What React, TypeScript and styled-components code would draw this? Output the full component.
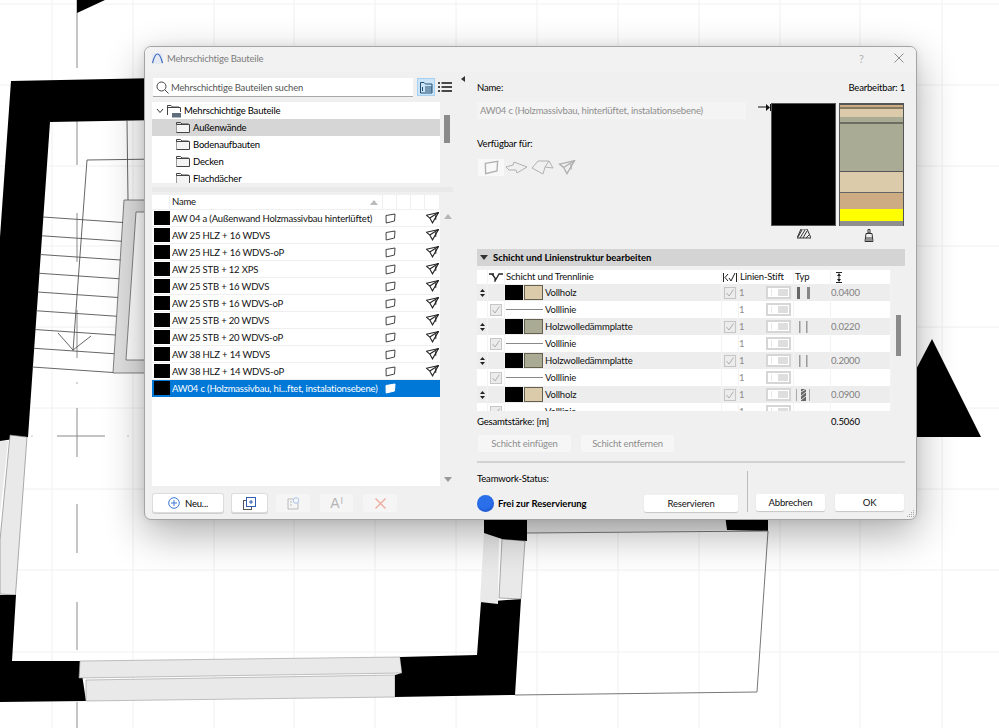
import React from "react";
import styled, { createGlobalStyle } from "styled-components";

const Global = createGlobalStyle`
  html, body { margin: 0; padding: 0; background: #fff; }
  body { font-family: "Lato", "Noto Sans", "Liberation Sans", sans-serif; font-size: 9.5px; letter-spacing: -.18px; color: #000; }
  * { box-sizing: border-box; }
`;

const Page = styled.div`
  width: 999px; height: 728px; overflow: hidden; background: #fff; position: relative;
`;
const PlanSvg = styled.svg`
  position: absolute; left: 0; top: 0; width: 999px; height: 728px; display: block;
`;
const Dialog = styled.div`
  position: absolute; left: 144px; top: 46px; width: 773px; height: 474px;
  background: #f0f0f0; border: 1px solid #a4a4a4; border-radius: 7px;
  box-shadow: 0 14px 40px rgba(0,0,0,.32), 0 0 8px rgba(0,0,0,.08);
  display: flex; flex-direction: column; overflow: hidden;
`;
const TitleBar = styled.div`
  height: 25px; flex: none; display: flex; align-items: center; padding: 0 12px 3px 7px;
  background: #f2f2f2; color: #7c7c7c;
`;
const LogoBox = styled.div`
  width: 11px; height: 11px; background: #e4e9f2; border-radius: 2px; display: flex;
`;
const TitleText = styled.span`margin-left: 4px; flex: 1;`;
const Help = styled.span`width: 35px; font-size: 11px; color: #b4b4b4;`;
const Body = styled.div`flex: 1; display: flex; min-height: 0;`;
const LeftPane = styled.div`
  width: 315px; flex: none; padding: 6px 0 0 7px; display: flex; flex-direction: column;
`;
const SearchRow = styled.div`display: flex; align-items: flex-start; height: 19px;`;
const SearchBox = styled.div`
  width: 260px; height: 19px; margin-left: 1px; background: #fff; border-bottom: 1px solid #a8a8a8;
  display: flex; align-items: center; padding-left: 3px; color: #555; gap: 2px;
`;
const ViewToggle = styled.div<{ $on?: boolean }>`
  width: 18px; height: 18px; margin-left: ${p => (p.$on ? "4px" : "1px")};
  background: ${p => (p.$on ? "#cde4f7" : "transparent")};
  border: 1px solid ${p => (p.$on ? "#a5d0f2" : "transparent")};
  display: flex; align-items: center; justify-content: center;
`;
const TreeRow = styled.div`display: flex; margin-top: 5px; height: 81px; gap: 4px;`;
const Tree = styled.div`width: 288px; background: #fff; overflow: hidden;`;
const TreeItem = styled.div<{ $sel?: boolean; $root?: boolean }>`
  height: 17px; display: flex; align-items: center; gap: ${p => (p.$root ? "2px" : "3px")}; flex: none;
  padding-left: ${p => (p.$root ? "4px" : "24px")};
  background: ${p => (p.$sel ? "#d6d6d6" : "transparent")};
`;
const ScrollTrack = styled.div<{ $top: number; $h: number; $w?: number }>`
  width: ${p => p.$w ?? 6}px; flex: none; padding-top: ${p => p.$top}px;
  &::before { content: ""; display: block; height: ${p => p.$h}px; background: #8b8b8b; }
`;
const SplitBand = styled.div`height: 5px; width: 301px; margin-top: 4px; background: #e9e9e9;`;
const ListRow = styled.div`display: flex; margin-top: 3px; height: 291px;`;
const List = styled.div`width: 288px; background: #fff;`;
const columns = "18px 213px 14px 14px 14px 15px";
const ListHead = styled.div`
  display: grid; grid-template-columns: ${columns}; height: 15px; border-bottom: 1px solid #f0f0f0;
`;
const HeadCell = styled.div`
  border-right: 1px solid #f0f0f0; display: flex; align-items: center; justify-content: space-between;
  padding: 0 4px 0 2px; color: #111; line-height: 14px;
`;
const ListItem = styled.div<{ $sel?: boolean }>`
  display: grid; grid-template-columns: ${columns}; height: 17px; align-items: center;
  background: ${p => (p.$sel ? "#0078d7" : "#fff")};
  color: ${p => (p.$sel ? "#fff" : "#111")};
  border-bottom: 1px solid ${p => (p.$sel ? "#0078d7" : "#efefef")};
  white-space: nowrap;
`;
const ListSwatch = styled.div`width: 16px; height: 14px; margin-left: 2px; background: #000;`;
const ListName = styled.div`padding-left: 2px; overflow: visible;`;
const IconCell = styled.div<{ $span?: number }>`
  grid-column: span ${p => p.$span ?? 1}; display: flex; align-items: center; justify-content: center;
`;
const ListScroll = styled.div`
  flex: none; width: 16px; display: flex; flex-direction: column; justify-content: space-between;
  align-items: center; padding: 19px 0 4px 0;
`;
const ToolRow = styled.div`display: flex; margin-top: 8px; height: 18px; padding-left: 1px;`;
const ToolButton = styled.div<{ $w: number; $off?: boolean; $gap: number }>`
  width: ${p => p.$w}px; margin-right: ${p => p.$gap}px; height: 18px; border-radius: 2px;
  display: flex; align-items: center; justify-content: center; gap: 5px;
  background: ${p => (p.$off ? "#f5f5f5" : "#fff")};
  box-shadow: ${p => (p.$off ? "none" : "0 0 0 1px #dcdcdc, 0 1px 0 1px #cfcfcf")};
`;
const GlyphA = styled.span`
  font-size: 14px; line-height: 14px; color: #b5b5b5; font-family: "Liberation Sans", sans-serif;
`;
const GlyphCursor = styled.span`
  font-size: 9px; line-height: 9px; color: #b5b5b5; margin: -5px 0 0 -4px;
`;
const Splitter = styled.div`width: 17px; flex: none; padding: 1px 0 0 1px;`;
const RightPane = styled.div`width: 428px; flex: none; display: flex; flex-direction: column;`;
const NameRow = styled.div`
  display: flex; justify-content: space-between; margin-top: 9px; height: 14px; line-height: 14px;
`;
const MainRow = styled.div`display: flex; height: 147px; margin-top: 7px;`;
const MetaCol = styled.div`width: 269px; flex: none; display: flex; flex-direction: column;`;
const NameInput = styled.div`
  height: 17px; background: #f4f4f4; color: #8e8e8e; padding-left: 3px; line-height: 17px; white-space: nowrap;
`;
const AvailableLabel = styled.div`margin-top: 18px; height: 14px; line-height: 14px;`;
const AvailableIcons = styled.div`display: flex; align-items: center; margin-top: 8px; height: 17px; padding-left: 1px;`;
const AvailIcon = styled.div<{ $on?: boolean; $w: number }>`
  width: ${p => p.$w}px; height: 17px; display: flex; align-items: center; justify-content: center;
  background: ${p => (p.$on ? "#f8f8f8" : "transparent")};
`;
const Marker = styled.div`width: 25px; flex: none; padding: 0 0 0 12px;`;
const PreviewCol = styled.div`width: 133px; flex: none; padding-top: 1px;`;
const PreviewBoxes = styled.div`display: flex; gap: 3px; height: 123px;`;
const BlackBox = styled.div`width: 65px; background: #000; border: 1px solid #555;`;
const LayerBox = styled.div`
  width: 65px; display: flex; flex-direction: column; border-left: 1px solid #555; border-right: 1px solid #555;
`;
const LayerBand = styled.div<{ $c: string; $h: number }>`
  height: ${p => p.$h}px; background: ${p => p.$c}; flex: none;
`;
const PreviewIcons = styled.div`display: flex; gap: 3px; margin-top: 3px;`;
const PreviewIcon = styled.div<{ $w: number }>`width: ${p => p.$w}px; display: flex; justify-content: center;`;
const SectionHead = styled.div`
  height: 17px; background: #d4d4d4; display: flex; align-items: center; gap: 5px; padding-left: 3px;
  font-weight: 700; color: #000; flex: none; letter-spacing: -.02px;
`;
const TableRow = styled.div`display: flex; margin-top: 4px; height: 141px; gap: 5px;`;
const Table = styled.div`width: 414px; height: 141px; overflow: hidden; flex: none;`;
const tcols = "11px 17px 217px 17px 55px 37px 60px";
const THead = styled.div`
  display: grid; grid-template-columns: ${tcols}; height: 14px; background: #fff; line-height: 14px;
`;
const TRow = styled.div<{ $alt?: boolean }>`
  display: grid; grid-template-columns: ${tcols}; height: 17px; background: ${p => (p.$alt ? "#ededed" : "#fff")};
`;
const TCell = styled.div`
  display: flex; align-items: center; border-right: 1px solid #f3f3f3; color: #111;
  white-space: nowrap; min-width: 0; gap: 2px; line-height: 14px;
`;
const CenterCell = styled(TCell)`justify-content: center;`;
const TextHead = styled(TCell)`padding-left: 1px;`;
const TypCell = styled(TCell)`padding-left: 2px;`;
const PenCell = styled(TCell)`justify-content: space-between; color: #8c8c8c; padding-right: 2px;`;
const NumCell = styled(TCell)`color: #808080;`;
const Box = styled.div`
  width: 12px; height: 12px; border: 1px solid #c6c6c6; background: #ececec;
  display: flex; align-items: center; justify-content: center;
`;
const SwatchPair = styled.div`display: flex; gap: 1px;`;
const BlackSwatch = styled.div`width: 18px; height: 15px; background: #000;`;
const ColorSwatch = styled.div<{ $c: string }>`
  width: 19px; height: 15px; background: ${p => p.$c}; border: 1px solid #66604f;
`;
const LineSample = styled.div`width: 37px; height: 1px; background: #888; margin-left: 1px;`;
const PenToggle = styled.div`
  width: 25px; height: 13px; border: 2px solid #d6d6d6; background: #fff; display: flex; align-items: stretch;
  padding: 1px; justify-content: flex-end;
  &::before { content: ""; width: 1px; background: #e8e8e8; margin-right: 6px; }
  &::after { content: ""; width: 10px; background: #dedede; }
`;
const TotalRow = styled.div`display: flex; margin-top: 4px; height: 14px; line-height: 14px;`;
const TotalLabel = styled.div`width: 354px; flex: none;`;
const ActionRow = styled.div`display: flex; gap: 10px; margin-top: 6px; padding-left: 1px;`;
const ActionButton = styled.div`
  width: 93px; height: 17px; background: #f6f6f6; color: #8e8e8e; text-align: center; line-height: 17px;
  border-radius: 2px; white-space: nowrap;
`;
const Rule = styled.div`height: 2px; background: #d2d2d2; margin-top: 9px;`;
const FootRow = styled.div`display: flex; margin-top: 8px; height: 41px;`;
const TeamCol = styled.div`width: 270px; flex: none; padding-right: 9px; display: flex; flex-direction: column; justify-content: space-between;`;
const TeamLabel = styled.div`height: 14px; line-height: 14px; margin-top: 1px;`;
const TeamStatus = styled.div`display: flex; align-items: center; height: 18px;`;
const Dot = styled.div`
  width: 17px; height: 17px; border-radius: 50%; background: #2b6eea; box-shadow: inset -1px -2px 2px rgba(0,40,140,.25);
`;
const StatusText = styled.div`font-weight: 700; margin-left: 4px; flex: 1; color: #000; letter-spacing: -.02px;`;
const PushButton = styled.div<{ $w: number }>`
  width: ${p => p.$w}px; height: 17px; background: #fff; text-align: center; line-height: 17px; border-radius: 2px;
  box-shadow: 0 1px 1px rgba(0,0,0,.18); color: #111;
`;
const VRule = styled.div`width: 1px; height: 41px; background: #bdbdbd; flex: none;`;
const DoneCol = styled.div`display: flex; gap: 10px; padding: 23px 0 0 8px;`;
const Grip = styled.svg`position: absolute; right: 1px; bottom: 1px;`;

const gridXs = [52, 133, 214, 294, 375, 456, 537, 618, 699, 780, 860, 942];
const gridYs = [4, 85, 166, 246, 327, 408, 489, 570, 652];
const treads = Array.from({ length: 9 }, (_, i) => i);

const FloorPlan = () => (
  <PlanSvg viewBox="0 0 999 728">
    {gridXs.map(x => <line key={x} x1={x} x2={x} y1={0} y2={728} stroke="#f0f0f0" />)}
    {gridYs.map(y => <line key={y} x1={0} x2={999} y1={y} y2={y} stroke="#f0f0f0" />)}
    <g stroke="#8a8a8a" strokeWidth="1">
      <line x1="77" x2="77" y1="0" y2="68" />
      <line x1="77" x2="77" y1="120" y2="165" />
      <line x1="77" x2="77" y1="213" y2="262" />
      <line x1="77" x2="77" y1="310" y2="358" />
      <line x1="77" x2="77" y1="408" y2="457" />
      <line x1="57" x2="105" y1="436" y2="436" />
      <line x1="77" x2="77" y1="504" y2="553" />
      <line x1="77" x2="77" y1="602" y2="650" />
      <line x1="77" x2="77" y1="702" y2="728" />
    </g>
    <path d="M77 0H105L77 13Z" fill="#000" />
    <path d="M11 81L160 78V120L50 122L28 437L0 441V237Z" fill="#000" />
    <path d="M10 435L27 437L15.5 595L0 594V540Z" fill="#e9e9e9" stroke="#777" strokeWidth=".6" />
    <path d="M0 441H8L0 515Z" fill="#e9e9e9" />
    <path d="M0 595H16L12 661H80L86 701L0 702Z" fill="#000" />
    <path d="M80 661L400 657L402 673L79 678Z" fill="#e9e9e9" stroke="#999" strokeWidth=".6" />
    <path d="M86 680L395 675V697L86 701Z" fill="#e9e9e9" stroke="#999" strokeWidth=".6" />
    <path d="M400 657L477 655L481 602L521 599L515 695L395 697V675L402 673Z" fill="#000" />
    <path d="M484 533L499 535L498 604L480 602Z" fill="#e9e9e9" />
    <path d="M502 539L525 541L521 599L499 598Z" fill="#e9e9e9" stroke="#777" strokeWidth=".6" />
    <path d="M484 515H527V541L502 539L484 533Z" fill="#000" />
    <path d="M527 515H725L727 530L527 533Z" fill="#e9e9e9" />
    <path d="M725 515H768V531L727 530Z" fill="#000" />
    <path d="M527 533L768 531L757 692L515 695" fill="none" stroke="#777" />
    <path d="M124 200H160V373H113Z" fill="#e0e0e0" stroke="#666" strokeWidth=".8" />
    <path d="M136 212H160V360H126Z" fill="#fff" stroke="#666" strokeWidth=".8" />
    {treads.map(i => (
      <line key={i} x1={43 - i * 1.35} y1={217 + i * 18.75} x2={123 - i * 1.25} y2={222.5 + i * 18.75} stroke="#555" strokeWidth=".9" />
    ))}
    <g stroke="#555" strokeWidth=".9" fill="none">
      <path d="M127 120L128 200" />
      <path d="M160 159L87 160L73 351" />
      <path d="M58 333L73 350L91 336" />
    </g>
    <path d="M932 339L981 437H900V400Z" fill="#000" />
    <circle cx="32" cy="436" r=".6" fill="#888" />
    <circle cx="128" cy="436" r=".6" fill="#888" />
    <circle cx="77" cy="383" r=".7" fill="#888" />
  </PlanSvg>
);

const Folder = () => (
  <svg width="14" height="13" viewBox="0 0 14 13" fill="none" stroke="#444" strokeWidth="1">
    <path d="M.5 11.5V1.5H4.5L6 3H12.5" />
    <path d="M.5 3.5H13.5V11.5H.5" fill="#f4f4f4" />
  </svg>
);
const RootFolder = () => (
  <svg width="16" height="14" viewBox="0 0 16 14" fill="none" stroke="#444" strokeWidth="1">
    <path d="M1.5 11V1.5H5L6.500 3H13" />
    <path d="M1.500 3.500H14.500V8" />
    <rect x="6" y="9" width="9" height="4.500" fill="#5d6d7c" stroke="none" />
  </svg>
);
const TreeChevron = () => (
  <svg width="8" height="6" viewBox="0 0 8 6" fill="none" stroke="#333" strokeWidth="1"><path d="M1 1L4 4.500L7 1" /></svg>
);
const WallIcon = ({ sel, c = "#444", w = 11, h = 11 }: { sel?: boolean; c?: string; w?: number; h?: number }) => (
  <svg width={w} height={h} viewBox="0 0 11 11" fill={sel ? "#fff" : "none"} stroke={sel ? "#fff" : c} strokeWidth="1">
    <path d="M1 2.500L10 1L9.500 8L1.200 10Z" />
  </svg>
);
const PlaneIcon = ({ c = "#222", w = 13, h = 12 }: { c?: string; w?: number; h?: number }) => (
  <svg width={w} height={h} viewBox="0 0 12 11" fill="none" stroke={c} strokeWidth="1">
    <path d="M.5 3L11.500 .5L6 10L3.500 5.500Z" /><path d="M3.500 5.500L11.500 .5" /><path d="M9 3V7" />
  </svg>
);
const SlabIcon = () => (
  <svg width="23" height="13" viewBox="0 0 23 13" fill="none" stroke="#b0b0b0"><path d="M1 6L8 4L9 1L22 6L12 12L11 9L4 9Z" /></svg>
);
const RoofIcon = () => (
  <svg width="23" height="15" viewBox="0 0 23 15" fill="none" stroke="#b0b0b0"><path d="M1 8L7 1H18L22 8L14 7L12 14Z" /><path d="M14 7L18 1" /></svg>
);
const UpDown = () => (
  <svg width="5" height="8" viewBox="0 0 5 8" fill="#222"><path d="M2.500 0L5 3H0Z" /><path d="M2.500 8L5 5H0Z" /></svg>
);
const Check = () => (
  <svg width="10" height="10" viewBox="0 0 10 10" fill="none" stroke="#aeaeae" strokeWidth="1"><path d="M1.500 5L4 8L8.500 1.500" /></svg>
);
const Typ = ({ kind }: { kind: "thick" | "thin" | "hatch" }) => (
  <svg width="16" height="12" viewBox="0 0 16 12">
    {kind === "thick" && <><rect x="1" y="0" width="3" height="12" fill="#666" /><rect x="11" y="0" width="3" height="12" fill="#888" /></>}
    {kind === "thin" && <><rect x="3" y="0" width="1.500" height="12" fill="#999" /><rect x="10" y="0" width="1.500" height="12" fill="#999" /></>}
    {kind === "hatch" && <>
      <rect x="0" y="0" width="1" height="12" fill="#aaa" /><rect x="5" y="0" width="5" height="12" fill="#666" />
      <path d="M5 3L10 0M5 7L10 3M5 11L10 7" stroke="#ddd" strokeWidth="1" /><rect x="13" y="0" width="1" height="12" fill="#aaa" />
    </>}
  </svg>
);

const listRows = [
  "AW 04 a (Außenwand Holzmassivbau hinterlüftet)", "AW 25 HLZ + 16 WDVS", "AW 25 HLZ + 16 WDVS-oP", "AW 25 STB + 12 XPS",
  "AW 25 STB + 16 WDVS", "AW 25 STB + 16 WDVS-oP", "AW 25 STB + 20 WDVS", "AW 25 STB + 20 WDVS-oP",
  "AW 38 HLZ + 14 WDVS", "AW 38 HLZ + 14 WDVS-oP",
];
const bands: [string, number][] = [
  ["#555", 2], ["#cdac84", 2], ["#85795f", 2], ["#dbcbab", 8], ["#a9ab94", 5], ["#6d6e60", 2], ["#a9ab94", 47], ["#555", 1],
  ["#dbcbab", 20], ["#666", 1], ["#cdac84", 16], ["#ffff00", 12], ["#8f8f8f", 5],
];
const layers: { name: string; c: string; kind: "thick" | "thin" | "hatch"; t: string }[] = [
  { name: "Vollholz", c: "#dbcbab", kind: "thick", t: "0.0400" },
  { name: "Holzwolledämmplatte", c: "#a9ab94", kind: "thin", t: "0.0220" },
  { name: "Holzwolledämmplatte", c: "#a9ab94", kind: "thin", t: "0.2000" },
  { name: "Vollholz", c: "#dbcbab", kind: "hatch", t: "0.0900" },
];

export default function App() {
  return (
    <Page>
      <Global />
      <FloorPlan />
      <Dialog>
        <TitleBar>
          <LogoBox>
            <svg width="11" height="11" viewBox="0 0 11 11" fill="none" stroke="#3f6fc4" strokeWidth="1.200"><path d="M.5 10C2 4 3.500 1 5.500 1S9 4 10.500 10" /></svg>
          </LogoBox>
          <TitleText>Mehrschichtige Bauteile</TitleText>
          <Help>?</Help>
          <svg width="10" height="10" viewBox="0 0 10 10" stroke="#8d8d8d" strokeWidth="1"><path d="M.5 .5L9.500 9.500M9.500 .5L.5 9.500" /></svg>
        </TitleBar>
        <Body>
          <LeftPane>
            <SearchRow>
              <SearchBox>
                <svg width="13" height="13" viewBox="0 0 13 13" fill="none" stroke="#444" strokeWidth="1"><circle cx="5.500" cy="5.500" r="4.500" /><path d="M9 9L12.500 12.500" /></svg>
                <span>Mehrschichtige Bauteilen suchen</span>
              </SearchBox>
              <ViewToggle $on>
                <svg width="13" height="13" viewBox="0 0 13 13" fill="none" stroke="#1f4e72" strokeWidth="1"><path d="M.5 12V1.500H4L5.500 3H12V12Z" /><path d="M5 6H12M5 8H12M5 10H12M2.500 6V10" /></svg>
              </ViewToggle>
              <ViewToggle>
                <svg width="14" height="10" viewBox="0 0 14 10" stroke="#111" strokeWidth="1.500"><path d="M0 1H2M3.500 1H14M0 5H2M3.500 5H14M0 9H2M3.500 9H14" /></svg>
              </ViewToggle>
            </SearchRow>
            <TreeRow>
              <Tree>
                <TreeItem $root><TreeChevron /><RootFolder /><span>Mehrschichtige Bauteile</span></TreeItem>
                <TreeItem $sel><Folder /><span>Außenwände</span></TreeItem>
                <TreeItem><Folder /><span>Bodenaufbauten</span></TreeItem>
                <TreeItem><Folder /><span>Decken</span></TreeItem>
                <TreeItem><Folder /><span>Flachdächer</span></TreeItem>
              </Tree>
              <ScrollTrack $top={13} $h={28} />
            </TreeRow>
            <SplitBand />
            <ListRow>
              <List>
                <ListHead>
                  <HeadCell />
                  <HeadCell>
                    <span>Name</span>
                    <svg width="8" height="5" viewBox="0 0 8 5" fill="#bbb"><path d="M4 0L8 5H0Z" /></svg>
                  </HeadCell>
                  <HeadCell /><HeadCell /><HeadCell /><HeadCell />
                </ListHead>
                {listRows.map(r => (
                  <ListItem key={r}>
                    <ListSwatch />
                    <ListName>{r}</ListName>
                    <IconCell><WallIcon /></IconCell>
                    <IconCell /><IconCell />
                    <IconCell><PlaneIcon /></IconCell>
                  </ListItem>
                ))}
                <ListItem $sel>
                  <ListSwatch />
                  <ListName>AW04 c (Holzmassivbau, hi...ftet, instalationsebene)</ListName>
                  <IconCell><WallIcon sel /></IconCell>
                  <IconCell /><IconCell /><IconCell />
                </ListItem>
              </List>
              <ListScroll>
                <svg width="8" height="5" viewBox="0 0 8 5" fill="#b5b5b5"><path d="M4 0L8 5H0Z" /></svg>
                <svg width="8" height="5" viewBox="0 0 8 5" fill="#9a9a9a"><path d="M4 5L8 0H0Z" /></svg>
              </ListScroll>
            </ListRow>
            <ToolRow>
              <ToolButton $w={70} $gap={9}>
                <svg width="12" height="12" viewBox="0 0 12 12" fill="none" stroke="#3a78d8" strokeWidth="1"><circle cx="6" cy="6" r="5.300" /><path d="M6 3V9M3 6H9" /></svg>
                <span>Neu...</span>
              </ToolButton>
              <ToolButton $w={35} $gap={9}>
                <svg width="13" height="13" viewBox="0 0 13 13" fill="none"><rect x=".5" y="3.500" width="8" height="9" fill="#fff" stroke="#555" /><rect x="3.500" y=".5" width="9" height="9" fill="#fff" stroke="#2f5fb0" /><path d="M8 3V7M6 5H10" stroke="#2f5fb0" /></svg>
              </ToolButton>
              <ToolButton $w={34} $off $gap={10}>
                <svg width="13" height="13" viewBox="0 0 13 13" fill="none" stroke="#bbb"><path d="M1 2H6M1 2V12H11V6" /><circle cx="9" cy="3.500" r="2.800" stroke="#a9c4ea" /><path d="M3 5H5M3 8H5" /></svg>
              </ToolButton>
              <ToolButton $w={33} $off $gap={10}>
                <GlyphA>A</GlyphA><GlyphCursor>I</GlyphCursor>
              </ToolButton>
              <ToolButton $w={34} $off $gap={0}>
                <svg width="11" height="11" viewBox="0 0 11 11" stroke="#eea99d" strokeWidth="1.300"><path d="M.5 .5L10.500 10.500M10.500 .5L.5 10.500" /></svg>
              </ToolButton>
            </ToolRow>
          </LeftPane>
          <Splitter>
            <svg width="4" height="6" viewBox="0 0 4 6" fill="#333"><path d="M0 3L4 0V6Z" /></svg>
          </Splitter>
          <RightPane>
            <NameRow><span>Name:</span><span>Bearbeitbar: 1</span></NameRow>
            <MainRow>
              <MetaCol>
                <NameInput>AW04 c (Holzmassivbau, hinterlüftet, instalationsebene)</NameInput>
                <AvailableLabel>Verfügbar für:</AvailableLabel>
                <AvailableIcons>
                  <AvailIcon $on $w={26}><WallIcon c="#b0b0b0" w={17} h={15} /></AvailIcon>
                  <AvailIcon $w={25}><SlabIcon /></AvailIcon>
                  <AvailIcon $w={26}><RoofIcon /></AvailIcon>
                  <AvailIcon $w={24}><PlaneIcon c="#b0b0b0" w={20} h={15} /></AvailIcon>
                </AvailableIcons>
              </MetaCol>
              <Marker>
                <svg width="13" height="7" viewBox="0 0 13 7" fill="#111"><path d="M0 3H8" stroke="#111" /><path d="M8 0L12 3.500L8 7Z" /><rect x="12" y="0" width="1" height="7" /></svg>
              </Marker>
              <PreviewCol>
                <PreviewBoxes>
                  <BlackBox />
                  <LayerBox>
                    {bands.map(([c, h], i) => <LayerBand key={i} $c={c} $h={h} />)}
                  </LayerBox>
                </PreviewBoxes>
                <PreviewIcons>
                  <PreviewIcon $w={65}>
                    <svg width="14" height="10" viewBox="0 0 14 10" fill="#333"><path d="M4 0H10L14 9H0Z" fill="none" stroke="#333" /><path d="M1 8L5 1M3 9L8 1M6 9L10 2M9 9L12 6" stroke="#333" strokeWidth="1" /></svg>
                  </PreviewIcon>
                  <PreviewIcon $w={59}>
                    <svg width="10" height="13" viewBox="0 0 10 13" fill="none" stroke="#333"><path d="M4 .5H6V4H4Z" /><path d="M2 4.500H8L9 12.500H1Z" /><path d="M1 9H9M2 11H8" /></svg>
                  </PreviewIcon>
                </PreviewIcons>
              </PreviewCol>
            </MainRow>
            <SectionHead>
              <svg width="8" height="5" viewBox="0 0 8 5" fill="#333"><path d="M0 0H8L4 5Z" /></svg>
              <span>Schicht und Linienstruktur bearbeiten</span>
            </SectionHead>
            <TableRow>
              <Table>
                <THead>
                  <TCell />
                  <CenterCell>
                    <svg width="14" height="9" viewBox="0 0 14 9" fill="none" stroke="#222" strokeWidth="1.300"><path d="M0 1H5M3 1L6 5V8L10 1H14" /></svg>
                  </CenterCell>
                  <TextHead>Schicht und Trennlinie</TextHead>
                  <CenterCell>
                    <svg width="14" height="9" viewBox="0 0 14 9" fill="none" stroke="#222"><path d="M.5 0V9M2 4.500L5 1M2 4.500L5 8M6 5L8 8L12 0M13.500 0V9" /></svg>
                  </CenterCell>
                  <TextHead>Linien-Stift</TextHead>
                  <TextHead>Typ</TextHead>
                  <TCell>
                    <svg width="22" height="11" viewBox="0 0 22 11" fill="#222"><path d="M5 .5H11M5 10.500H11" stroke="#222" /><path d="M8 1L10 4H6ZM8 10L10 7H6Z" /><path d="M8 3V8" stroke="#222" /></svg>
                  </TCell>
                </THead>
                {layers.map((l, i) => (
                  <React.Fragment key={i}>
                    <TRow $alt>
                      <CenterCell><UpDown /></CenterCell>
                      <TCell />
                      <TCell><SwatchPair><BlackSwatch /><ColorSwatch $c={l.c} /></SwatchPair><span>{l.name}</span></TCell>
                      <CenterCell><Box><Check /></Box></CenterCell>
                      <PenCell><span>1</span><PenToggle /></PenCell>
                      <TypCell><Typ kind={l.kind} /></TypCell>
                      <NumCell>{l.t}</NumCell>
                    </TRow>
                    <TRow>
                      <TCell />
                      <CenterCell><Box><Check /></Box></CenterCell>
                      <TCell><LineSample /><span>Volllinie</span></TCell>
                      <TCell />
                      <PenCell><span>1</span><PenToggle /></PenCell>
                      <TCell />
                      <TCell />
                    </TRow>
                  </React.Fragment>
                ))}
              </Table>
              <ScrollTrack $top={45} $h={41} $w={5} />
            </TableRow>
            <TotalRow><TotalLabel>Gesamtstärke: [m]</TotalLabel><span>0.5060</span></TotalRow>
            <ActionRow>
              <ActionButton>Schicht einfügen</ActionButton>
              <ActionButton>Schicht entfernen</ActionButton>
            </ActionRow>
            <Rule />
            <FootRow>
              <TeamCol>
                <TeamLabel>Teamwork-Status:</TeamLabel>
                <TeamStatus>
                  <Dot />
                  <StatusText>Frei zur Reservierung</StatusText>
                  <PushButton $w={94}>Reservieren</PushButton>
                </TeamStatus>
              </TeamCol>
              <VRule />
              <DoneCol>
                <PushButton $w={69}>Abbrechen</PushButton>
                <PushButton $w={69}>OK</PushButton>
              </DoneCol>
            </FootRow>
          </RightPane>
        </Body>
        <Grip width="8" height="8" viewBox="0 0 8 8" fill="#a8a8a8">
          <rect x="6" y="0" width="1" height="1" /><rect x="4" y="2" width="1" height="1" /><rect x="6" y="2" width="1" height="1" />
          <rect x="2" y="4" width="1" height="1" /><rect x="4" y="4" width="1" height="1" /><rect x="6" y="4" width="1" height="1" />
          <rect x="0" y="6" width="1" height="1" /><rect x="2" y="6" width="1" height="1" /><rect x="4" y="6" width="1" height="1" /><rect x="6" y="6" width="1" height="1" />
        </Grip>
      </Dialog>
    </Page>
  );
}
